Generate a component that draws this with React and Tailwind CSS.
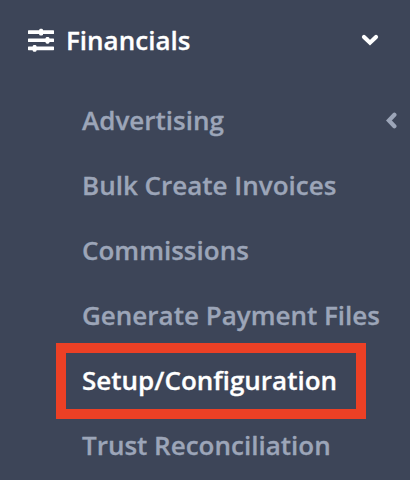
const items = [
  { label: "Advertising", expandable: true },
  { label: "Bulk Create Invoices" },
  { label: "Commissions" },
  { label: "Generate Payment Files" },
  { label: "Setup/Configuration", active: true },
  { label: "Trust Reconciliation" }
];

function SlidersIcon() {
  return (
    <svg className="h-[24px] w-[26px] shrink-0" viewBox="0 0 26 24" fill="currentColor">
      <rect x="0" y="2.3" width="26" height="3.7" rx="0.6" />
      <rect x="0" y="10.4" width="26" height="3.7" rx="0.6" />
      <rect x="0" y="18.5" width="26" height="3.7" rx="0.6" />
      <rect x="11.2" y="0.8" width="3.8" height="6.8" rx="1.4" />
      <rect x="17.6" y="8.9" width="3.8" height="6.8" rx="1.4" />
      <rect x="4.7" y="17" width="3.8" height="6.8" rx="1.4" />
    </svg>
  );
}

function Chevron({ className, d, viewBox }) {
  return (
    <svg className={className} viewBox={viewBox} fill="none" stroke="currentColor" strokeWidth="4.2" strokeLinecap="round">
      <path d={d} />
    </svg>
  );
}

function MenuItem({ item }) {
  return (
    <li className={`relative flex h-[65px] items-center justify-between pl-[82px] pr-[13px] ${item.active ? "text-white" : "text-[#9ca5b8]"}`}>
      <span>{item.label}</span>
      {item.expandable ? <Chevron className="h-[17px] w-[11px]" viewBox="0 0 11 17" d="M8.4 2.7L2.9 8.5l5.5 5.8" /> : null}
      {item.active ? <div className="absolute left-[56px] top-[-5px] h-[76px] w-[310px] border-[10px] border-[#ec4025]" /> : null}
    </li>
  );
}

export default function App() {
  return (
    <nav className="h-[480px] w-[410px] overflow-hidden bg-[#3d4558] font-['Open_Sans',sans-serif] text-[26px] font-semibold whitespace-nowrap [-webkit-text-stroke:0.3px_currentColor]">
      <div className="flex h-[88px] items-center pb-[8px] pl-[28px] pr-[31px] text-white">
        <SlidersIcon />
        <span className="ml-[12px] flex-1">Financials</span>
        <Chevron className="h-[12px] w-[18px]" viewBox="0 0 18 12" d="M3 3l6 5.7L15 3" />
      </div>
      <ul>
        {items.map(item => (
          <MenuItem key={item.label} item={item} />
        ))}
      </ul>
    </nav>
  );
}
